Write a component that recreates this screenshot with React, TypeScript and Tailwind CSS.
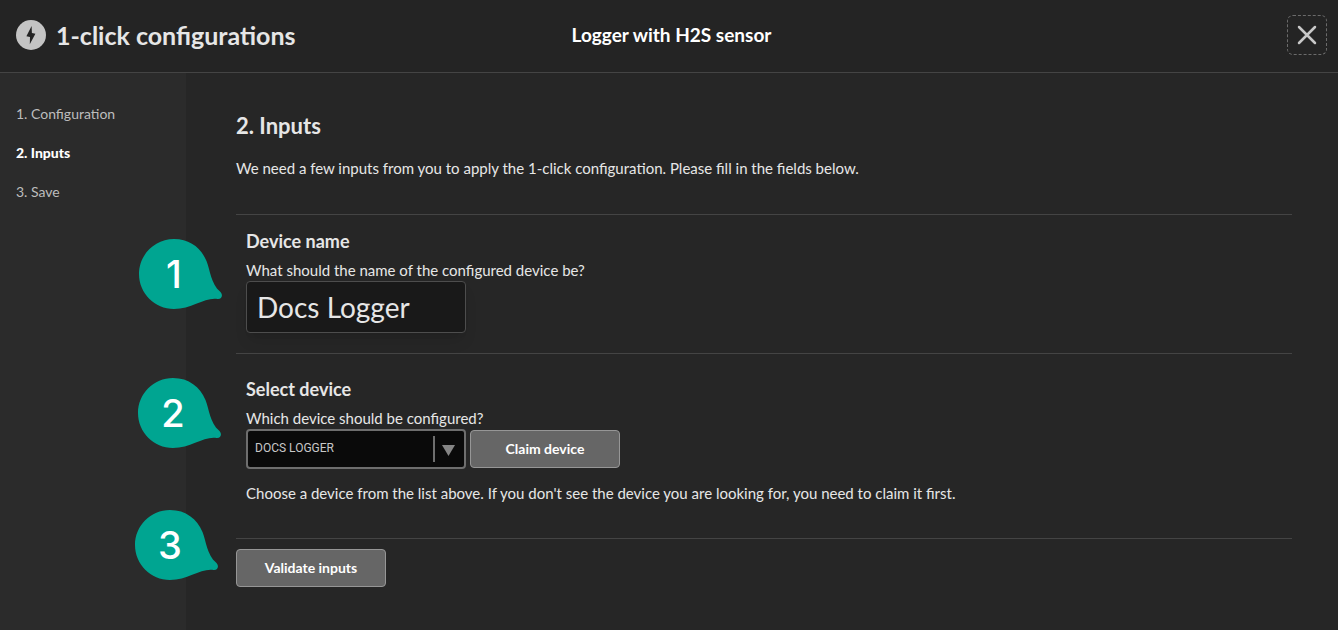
import { useState } from "react";

interface Step {
  label: string;
  href: string;
}

const steps: Step[] = [
  { label: "1. Configuration", href: "#configuration" },
  { label: "2. Inputs", href: "#inputs" },
  { label: "3. Save", href: "#save" },
];

function BoltIcon() {
  return (
    <svg viewBox="0 0 30 30" className="h-[30px] w-[30px] shrink-0" aria-hidden="true">
      <circle cx="15" cy="15" r="15" fill="#c4c4c4" />
      <path d="M15.600 6 L10.400 16.200 L14 16.900 L13.800 24.300 L19.400 13.800 L15.900 13.100 Z" fill="#242424" />
    </svg>
  );
}

// Numbered teal bubble with a tail pointing at the field on its right
function Marker({ value, className }: { value: number; className: string }) {
  return (
    <div className={`absolute h-[70px] w-[84px] ${className}`}>
      <svg viewBox="0 0 84 70" className="absolute inset-0 h-full w-full" aria-hidden="true">
        <path
          d="M35 0 C51 0 62 9 67.500 22 C71 30.500 72 45 81 52.500 C84.500 56 83 60.500 78.500 60 C66 58 53 70 35 70 C15.700 70 0 54.300 0 35 C0 15.700 15.700 0 35 0 Z"
          fill="#00a591"
        />
      </svg>
      <span className="relative flex h-[70px] w-[70px] items-center justify-center font-['Inter'] text-[38px] font-medium text-white">
        {value}
      </span>
    </div>
  );
}

function Button({ children }: { children: string }) {
  return (
    <button
      type="button"
      className="h-[38px] w-[150px] rounded border border-[#969696] bg-[#666666] text-[14px] font-bold text-white hover:bg-[#737373]"
    >
      {children}
    </button>
  );
}

export default function App() {
  const [name, setName] = useState("Docs Logger");
  const [device, setDevice] = useState("docs-logger");

  return (
    <div className="flex min-h-screen flex-col bg-[#262626] font-['Lato',sans-serif] text-[15px] leading-[22px] text-[#e6e6e6]">
      <header className="grid h-[73px] grid-cols-[1fr_auto_1fr] items-center border-b border-[#444444] bg-[#242424] pr-[11px] pb-[3px] pl-4">
        <div className="flex items-center gap-[10px]">
          <BoltIcon />
          <h1 className="text-[25px] font-bold">1-click configurations</h1>
        </div>
        <p className="text-[19px] font-bold text-white">Logger with H2S sensor</p>
        <button
          type="button"
          aria-label="Close"
          className="flex h-10 w-10 items-center justify-center justify-self-end rounded-md border border-dashed border-[#6b6b6b]"
        >
          <svg viewBox="0 0 20 20" className="h-5 w-5" fill="none" stroke="#c8c8c8" strokeWidth="2.500" strokeLinecap="round">
            <path d="M2 2 L18 18 M18 2 L2 18" />
          </svg>
        </button>
      </header>

      <div className="flex flex-1">
        <nav className="w-[186px] shrink-0 bg-[#2b2b2b] pt-[30px] pl-4">
          <ul className="flex flex-col gap-[17px] text-[14px]">
            {steps.map((step, index) => (
              <li key={step.href}>
                <a
                  href={step.href}
                  className={index === 1 ? "font-black text-white" : "text-[#bdbdbd] hover:text-white"}
                >
                  {step.label}
                </a>
              </li>
            ))}
          </ul>
        </nav>

        <main className="min-w-0 flex-1 pt-[39px] pr-[46px] pb-8 pl-[50px]">
          <h2 className="text-[22px] leading-7 font-bold">2. Inputs</h2>
          <p className="mt-[17px] mb-[35px]">
            We need a few inputs from you to apply the 1-click configuration. Please fill in the fields below.
          </p>

          <section className="relative border-t border-[#444444] px-[10px] pt-4 pb-5">
            <Marker value={1} className="top-6 -left-[97px]" />
            <h3 className="mb-2 text-[18px] leading-5 font-bold">Device name</h3>
            <label htmlFor="device-name" className="block">
              What should the name of the configured device be?
            </label>
            <input
              id="device-name"
              type="text"
              value={name}
              onChange={(e) => setName(e.target.value)}
              className="block h-[52px] w-[220px] rounded border border-[#4d4d4d] bg-[#191919] px-[10px] text-[28px] shadow-lg outline-none"
            />
          </section>

          <section className="relative border-t border-[#444444] px-[10px] pt-[25px] pb-[34px]">
            <Marker value={2} className="top-6 -left-[98px]" />
            <h3 className="mb-2 text-[18px] leading-5 font-bold">Select device</h3>
            <label htmlFor="device" className="block">
              Which device should be configured?
            </label>
            <div className="flex items-center gap-1">
              <div className="relative">
                <select
                  id="device"
                  value={device}
                  onChange={(e) => setDevice(e.target.value)}
                  className="block h-10 w-[220px] appearance-none rounded border-2 border-[#6e6e6e] bg-[#0a0a0a] pr-10 pb-[2px] pl-[7px] font-['Roboto',sans-serif] text-[12px] text-[#c8c8c8] outline-none"
                >
                  <option value="docs-logger">DOCS LOGGER</option>
                </select>
                <svg viewBox="0 0 24 26" className="pointer-events-none absolute top-[7px] right-[9px] h-[26px] w-6" aria-hidden="true">
                  <path d="M1 0 V26" stroke="#6e6e6e" strokeWidth="2" />
                  <path d="M9 9 H22 L15.500 20 Z" fill="#858585" />
                </svg>
              </div>
              <Button>Claim device</Button>
            </div>
            <p className="mt-[13px]">
              Choose a device from the list above. If you don't see the device you are looking for, you need to claim it first.
            </p>
          </section>

          <section className="relative border-t border-[#444444] pt-[10px]">
            <Marker value={3} className="-top-[29px] -left-[101px]" />
            <Button>Validate inputs</Button>
          </section>
        </main>
      </div>
    </div>
  );
}
